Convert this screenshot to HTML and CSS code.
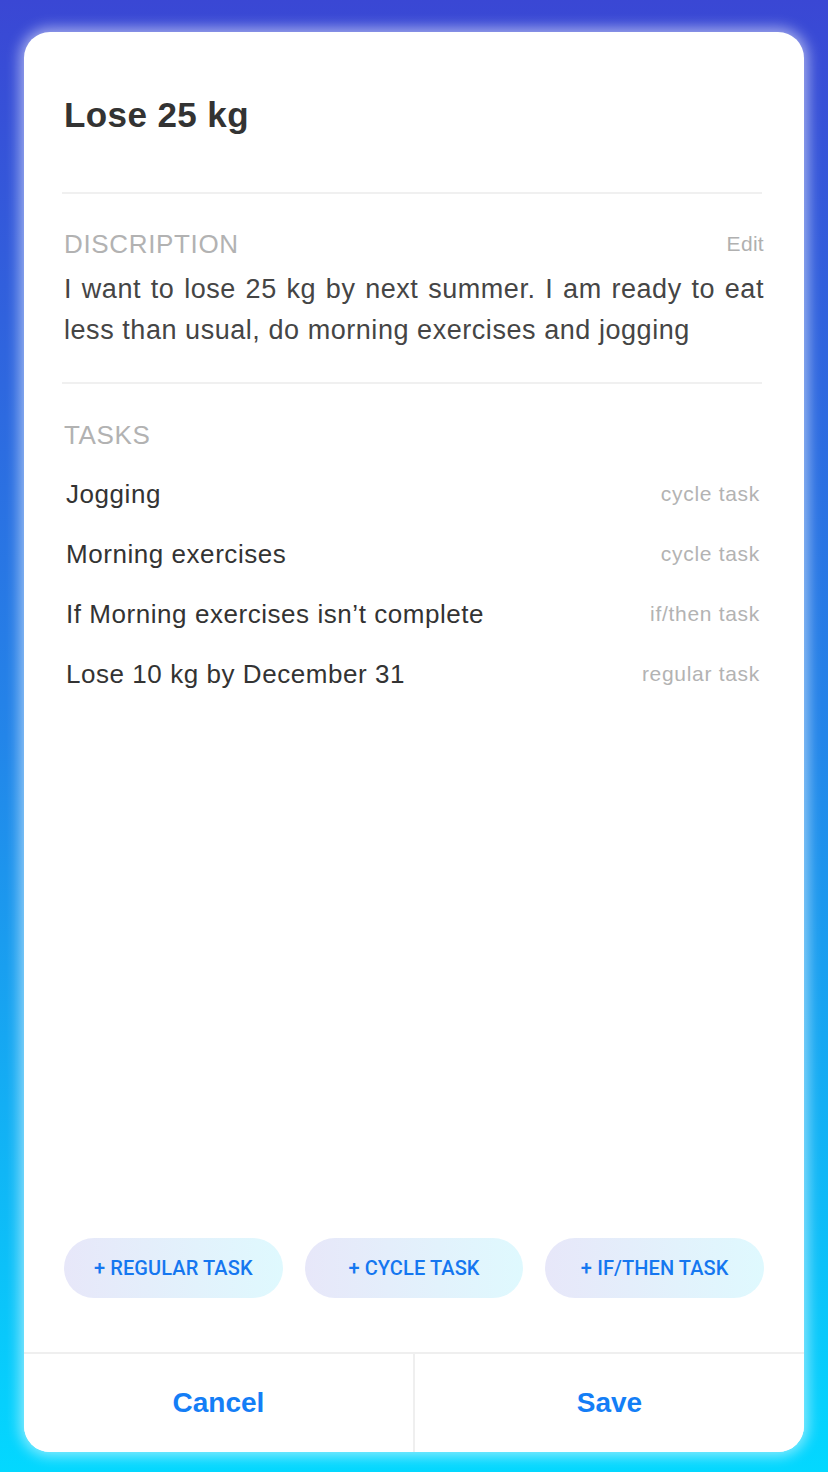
FILE: index.html
```html
<!DOCTYPE html>
<html lang="en">
<head>
<meta charset="utf-8">
<title>Lose 25 kg</title>
<link rel="stylesheet" href="styles.css">
</head>
<body>
<div class="card">
  <h1 class="title">Lose 25 kg</h1>
  <div class="divider divider-title"></div>
  <section class="section">
    <div class="section-head">
      <span class="section-label">DISCRIPTION</span>
      <span class="edit">Edit</span>
    </div>
    <p class="description">I want to lose 25 kg by next summer. I am ready to eat less than usual, do morning exercises and jogging</p>
  </section>
  <div class="divider divider-desc"></div>
  <section class="section tasks">
    <div class="section-head">
      <span class="section-label">TASKS</span>
    </div>
    <ul class="task-list">
      <li class="task"><span class="task-name">Jogging</span><span class="task-type">cycle task</span></li>
      <li class="task"><span class="task-name">Morning exercises</span><span class="task-type">cycle task</span></li>
      <li class="task"><span class="task-name">If Morning exercises isn’t complete</span><span class="task-type">if/then task</span></li>
      <li class="task"><span class="task-name">Lose 10 kg by December 31</span><span class="task-type">regular task</span></li>
    </ul>
  </section>
  <div class="spacer"></div>
  <div class="add-buttons">
    <button class="add-btn">+ REGULAR TASK</button>
    <button class="add-btn">+ CYCLE TASK</button>
    <button class="add-btn">+ IF/THEN TASK</button>
  </div>
  <div class="footer">
    <button class="footer-btn">Cancel</button>
    <button class="footer-btn footer-btn-right">Save</button>
  </div>
</div>
</body>
</html>
```

FILE: styles.css
```css
* { box-sizing: border-box; }
html, body { margin: 0; padding: 0; }
body {
  width: 828px;
  height: 1472px;
  overflow: hidden;
  background: linear-gradient(to bottom, #3a47d4 0%, #2385e9 50%, #03d8ff 100%);
  font-family: "Liberation Sans", Arial, sans-serif;
  padding: 32px 24px 20px;
}
.card {
  width: 780px;
  height: 1420px;
  background: #fff;
  border-radius: 26px;
  box-shadow: 0 0 14px 4px rgba(255, 255, 255, 0.55);
  display: flex;
  flex-direction: column;
  overflow: hidden;
}
.title {
  margin: 0;
  padding: 63px 40px 0;
  font-size: 35px;
  line-height: 40px;
  font-weight: bold;
  letter-spacing: 0.4px;
  color: #333;
}
.divider {
  height: 2px;
  background: #f0f0f0;
  margin: 0 42px 0 38px;
}
.divider-title { margin-top: 57px; }
.section { padding: 0 40px; }
.section-head {
  display: flex;
  justify-content: space-between;
  align-items: center;
  height: 30px;
  margin-top: 35px;
}
.section-label {
  font-size: 26px;
  color: #b2b2b2;
  letter-spacing: 0.65px;
}
.edit {
  font-size: 21px;
  color: #b0b0b0;
  letter-spacing: 0.3px;
}
.description {
  margin: 10px 0 31px;
  font-size: 27px;
  line-height: 41px;
  color: #454545;
  letter-spacing: 0.55px;
  text-align: justify;
}
.tasks .section-head { margin-top: 36px; }
.task-list {
  list-style: none;
  margin: 14px 0 0;
  padding: 0 4px 0 2px;
}
.task {
  display: flex;
  justify-content: space-between;
  align-items: center;
  height: 60px;
}
.task-name {
  font-size: 26px;
  color: #333;
  letter-spacing: 0.55px;
}
.task-type {
  font-size: 21px;
  color: #b3b3b3;
  letter-spacing: 0.7px;
}
.spacer { flex: 1; }
.add-buttons {
  display: grid;
  grid-template-columns: repeat(3, 1fr);
  gap: 22px;
  padding: 0 40px;
  margin-bottom: 54px;
}
.add-btn {
  height: 60px;
  border: none;
  border-radius: 30px;
  background: linear-gradient(to right, #e7e7f9, #dff9fe);
  color: #1577f0;
  font-family: Roboto, "Liberation Sans", sans-serif;
  font-weight: 500;
  font-size: 20px;
  letter-spacing: 0.1px;
  padding: 0;
}
.footer {
  display: flex;
  height: 100px;
  border-top: 2px solid #efefef;
}
.footer-btn {
  flex: 1;
  border: none;
  background: #fff;
  color: #147ef6;
  font-family: "Liberation Sans", Arial, sans-serif;
  font-weight: bold;
  font-size: 28px;
  padding: 0;
}
.footer-btn-right { border-left: 2px solid #efefef; }
```
